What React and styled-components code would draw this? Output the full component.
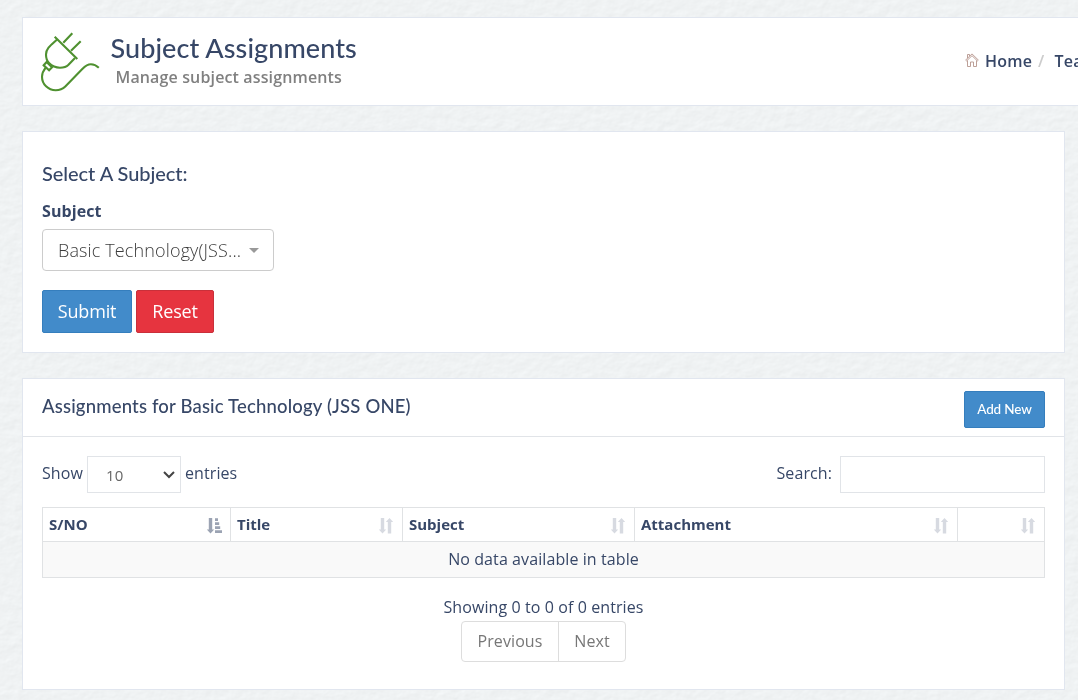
import React from "react";
import styled, { createGlobalStyle } from "styled-components";

const Global = createGlobalStyle`
  * { box-sizing: border-box; }
  html, body { margin: 0; height: 700px; overflow: hidden; }
  body {
    background: #eff2f4;
    color: #374767;
    font: 400 16px/24px "Open Sans", sans-serif;
    letter-spacing: 0.09px;
  }
`;

const Texture = styled.svg`
  position: fixed;
  inset: 0;
  width: 100%;
  height: 100%;
  z-index: -1;
`;

const Page = styled.div`
  width: 1087px;
  height: 700px;
  padding: 17px 22px 0;
`;

const Panel = styled.section`
  width: 1043px;
  background: #fff;
  border: 1px solid #e1e6ef;
`;

const Header = styled.header`
  width: 1080px;
  height: 89px;
  background: #fff;
  border: 1px solid #e1e6ef;
  margin-bottom: 25px;
  padding: 0 0 0 16px;
  display: flex;
  align-items: flex-start;
`;

const PlugIcon = styled.svg`
  width: 64px;
  height: 64px;
  margin-top: 11px;
  flex: none;
`;

const Titles = styled.div`
  margin: 14px 0 0 7.5px;
  flex: 1;
`;

const Title = styled.h1`
  margin: 0;
  font: 500 27px/32px Lato, sans-serif;
  letter-spacing: 0.08px;
  white-space: nowrap;
`;

const Subtitle = styled.p`
  margin: 1px 0 0 5px;
  font-size: 16px;
  line-height: 24px;
  font-weight: 600;
  letter-spacing: 0.14px;
  color: #808080;
`;

const Crumbs = styled.nav`
  display: flex;
  align-items: center;
  width: 136px;
  margin-top: 31px;
  white-space: nowrap;
  font-weight: 600;
  letter-spacing: 0.2px;
`;

const HomeIcon = styled.svg`
  width: 14px;
  height: 14px;
  margin: -2px 6px 0 0;
  flex: none;
`;

const Slash = styled.span`
  color: #ccc;
  margin: 0 10px 0 6px;
`;

const FormPanel = styled(Panel)`
  height: 222px;
  margin-bottom: 25px;
  padding: 28px 18px 28px 19px;
`;

const FormHeading = styled.h2`
  margin: 0;
  font: 500 20px/26px Lato, sans-serif;
  letter-spacing: -0.05px;
`;

const Label = styled.label`
  display: block;
  margin-top: 13px;
  font-weight: 700;
  line-height: 24px;
`;

const Picker = styled.div`
  display: flex;
  align-items: center;
  width: 232px;
  height: 42px;
  margin-top: 6px;
  padding: 0 14px 0 15px;
  border: 1px solid #ccc;
  border-radius: 4px;
  color: #3c3c3c;
  font-size: 18px;
  font-weight: 300;
  letter-spacing: 0.13px;
  white-space: nowrap;
  justify-content: space-between;
`;

const Caret = styled.i`
  border: 5px solid transparent;
  border-top-color: #999;
  border-bottom: 0;
`;

const Actions = styled.div`
  display: flex;
  gap: 4px;
  margin-top: 19px;
`;

const Button = styled.button`
  width: ${(p) => p.$w}px;
  height: ${(p) => p.$h || 43}px;
  padding: 0 0 2px;
  border: 1px solid ${(p) => (p.$danger ? "#c9303a" : "#357ebd")};
  border-radius: 2px;
  background: ${(p) => (p.$danger ? "#e6343f" : "#428bca")};
  color: #fff;
  font: ${(p) => (p.$h ? '500 13.5px/20px Lato' : '400 18px/24px "Open Sans"')}, sans-serif;
  letter-spacing: ${(p) => (p.$h ? -0.13 : -0.18)}px;
`;

const TablePanel = styled(Panel)`
  height: 312px;
`;

const PanelHead = styled.div`
  display: flex;
  justify-content: space-between;
  height: 58px;
  padding: 12px 19px 0;
  border-bottom: 1px solid #e1e4e8;
`;

const PanelTitle = styled.h2`
  margin: 2px 0 0;
  font: 500 18.5px/26px Lato, sans-serif;
  letter-spacing: 0.17px;
`;

const Body = styled.div`
  padding: 19px 19px 0;
`;

const Controls = styled.div`
  display: flex;
  align-items: flex-start;
  height: 51px;
  line-height: 34px;
`;

const Length = styled.div`
  display: flex;
  width: 94px;
  height: 37px;
  margin: 0 4px;
  padding: 1px 5px 0 18px;
  border: 1px solid #e1e4e8;
  color: #666;
  font-size: 15px;
  align-items: center;
  justify-content: space-between;
`;

const Search = styled.input`
  width: 205px;
  height: 37px;
  margin-left: 8px;
  border: 1px solid #e1e4e8;
`;

const SearchLabel = styled.span`
  margin-left: auto;
`;

const Table = styled.div`
  border: 1px solid #e0e2e4;
  height: 71px;
`;

const HeadRow = styled.div`
  display: grid;
  grid-template-columns: 188px 172px 232px 323px 1fr;
  height: 34px;
  border-bottom: 1px solid #e0e2e4;
`;

const HeadCell = styled.div`
  display: flex;
  justify-content: space-between;
  align-items: center;
  padding: 0 8px 0 6px;
  border-right: 1px solid #e0e2e4;
  font-size: 15px;
  line-height: 22px;
  font-weight: 700;
  letter-spacing: 0;
  & > span { margin-top: -1px; }
  &:last-child { border-right: 0; }
`;

const SortIcon = styled.svg`
  width: 16px;
  height: 16px;
  margin-top: 2px;
  fill: ${(p) => (p.$on ? "#9ba3b3" : "#d7dae1")};
`;

const EmptyRow = styled.div`
  height: 35px;
  line-height: 35px;
  background: #f9f9f9;
  text-align: center;
`;

const Info = styled.p`
  margin: 17px 0 2px;
  text-align: center;
`;

const Pager = styled.div`
  display: flex;
  width: 165px;
  height: 41px;
  margin: 0 auto;
  border: 1px solid #ddd;
  border-radius: 4px;
  color: #777;
  line-height: 38px;
  text-align: center;
`;

const PageLink = styled.span`
  width: ${(p) => p.$w}px;
  & + & { border-left: 1px solid #ddd; }
`;

function Sort({ on }) {
  return (
    <SortIcon $on={on} viewBox="0 0 16 16">
      <path d="M2.800 0h3.400v11.500h2L4.500 15.500.8 11.500h2z" />
      {on ? (
        <path d="M9 .3h3v2.600H9zM9 4.300h4.200v2.600H9zM9 8.200h5.200v2.700H9zM9 12.200h7v2.700H9z" />
      ) : (
        <path d="M9.800 15.500h3.400V4h2L11.500 0 7.800 4h2z" />
      )}
    </SortIcon>
  );
}

const columns = ["S/NO", "Title", "Subject", "Attachment", ""];

export default function App() {
  return (
    <>
      <Global />
      <Texture aria-hidden="true">
        <filter id="paper" x="0" y="0" width="100%" height="100%" colorInterpolationFilters="sRGB">
          <feTurbulence type="fractalNoise" baseFrequency="0.09 0.12" numOctaves="3" seed="4" result="n" />
          <feDiffuseLighting in="n" surfaceScale="0.13" diffuseConstant="1.1" lightingColor="#fbfeff">
            <feDistantLight azimuth="235" elevation="60" />
          </feDiffuseLighting>
        </filter>
        <rect width="100%" height="100%" filter="url(#paper)" />
      </Texture>
      <Page>
        <Header>
          <PlugIcon viewBox="0 0 64 64" fill="none" stroke="#4f9130" strokeWidth="2.1">
            <path d="M15.700 7.700 38.300 30M24.300 13.700 33.300 4.300M32 21.700 41.700 12.300" />
            <path d="M18.300 10.300C12 16 7 19.500 7 25.500c0 3 1 6.500 3 8.500 3 3 6.500 4.700 11 4.700 3.500 0 6.300-.7 8.500-2.900L36 29" />
            <path d="M4.700 36.300 7.600 33 13 38.300 10.100 41.200z" />
            <path d="M6.700 38.700C4.500 41.500 3 44 3 47.700c0 7.500 6.200 13.500 13.700 13.500 3.700 0 7-1.200 9.600-3.800L43.300 40c3-3 5.200-4.700 8.600-4.700 3 0 5.500 1.200 7.900 3.500" />
          </PlugIcon>
          <Titles>
            <Title>Subject Assignments</Title>
            <Subtitle>Manage subject assignments</Subtitle>
          </Titles>
          <Crumbs>
            <HomeIcon viewBox="0 0 14 14" fill="none" stroke="#b5958c" strokeWidth="0.9">
              <path d="M.7 7 7 .9 13.300 7l-.9.9L7 2.700 1.600 7.900zM2.500 7.500v6h3V9h3v4.500h3v-6M2.500 5V1.500h2V3" />
            </HomeIcon>
            Home<Slash>/</Slash>Teachers
          </Crumbs>
        </Header>
        <FormPanel>
          <FormHeading>Select A Subject:</FormHeading>
          <Label>Subject</Label>
          <Picker>Basic Technology(JSS...<Caret /></Picker>
          <Actions>
            <Button $w={90}>Submit</Button>
            <Button $w={78} $danger>Reset</Button>
          </Actions>
        </FormPanel>
        <TablePanel>
          <PanelHead>
            <PanelTitle>Assignments for Basic Technology (JSS ONE)</PanelTitle>
            <Button $w={81} $h={37}>Add New</Button>
          </PanelHead>
          <Body>
            <Controls>
              Show
              <Length>
                10
                <svg width="12" height="8" viewBox="0 0 12 8" fill="none" stroke="#444" strokeWidth="2"><path d="m1 1 5 5 5-5" /></svg>
              </Length>
              entries
              <SearchLabel>Search:</SearchLabel>
              <Search />
            </Controls>
            <Table>
              <HeadRow>
                {columns.map((c, i) => (
                  <HeadCell key={i}><span>{c}</span><Sort on={i === 0} /></HeadCell>
                ))}
              </HeadRow>
              <EmptyRow>No data available in table</EmptyRow>
            </Table>
            <Info>Showing 0 to 0 of 0 entries</Info>
            <Pager>
              <PageLink $w={96}>Previous</PageLink>
              <PageLink $w={67}>Next</PageLink>
            </Pager>
          </Body>
        </TablePanel>
      </Page>
    </>
  );
}
